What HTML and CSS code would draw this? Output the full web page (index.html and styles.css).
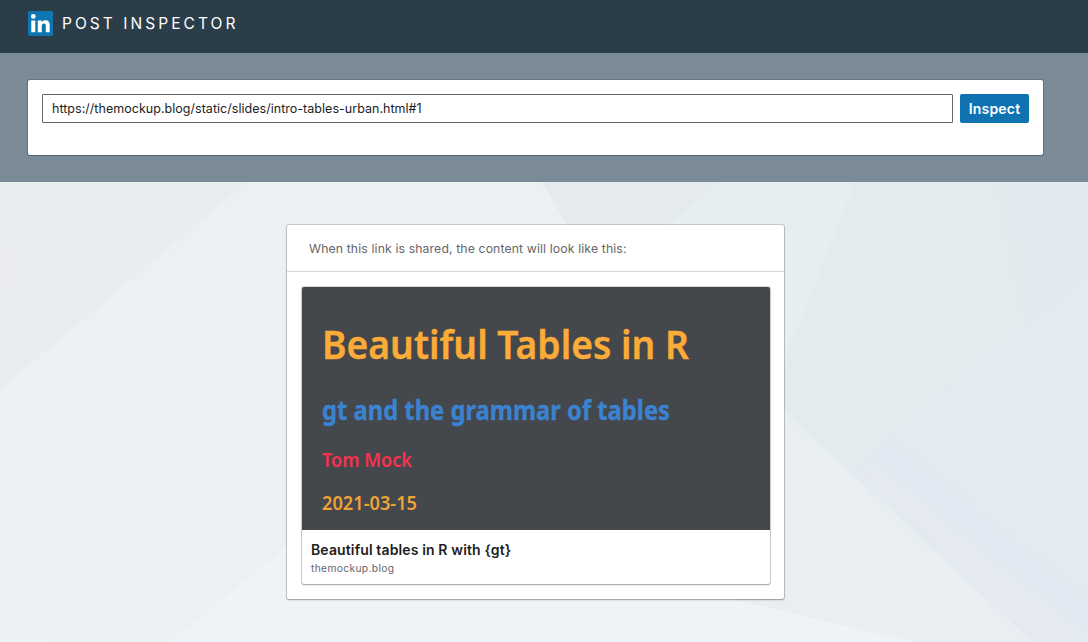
FILE: index.html
```
<!DOCTYPE html>
<html lang="en">
<head>
<meta charset="utf-8">
<title>Post Inspector</title>
<link rel="stylesheet" href="styles.css">
</head>
<body>
<header class="topbar">
  <svg class="logo" viewBox="0 0 25 25" aria-label="LinkedIn">
    <rect width="25" height="25" rx="1.5" fill="#0f76b3"/>
    <circle cx="5.3" cy="5.4" r="2.4" fill="#fff"/>
    <path fill="#fff" d="M3.3 9.5h4v11.8h-4zM9.8 9.5h3.8v1.7c.6-1.1 1.9-2 3.8-2 3.8 0 4.3 2.6 4.3 5.7v6.4h-3.9v-5.8c0-1.5-.1-3-1.9-3s-2.1 1.4-2.1 2.9v5.9h-4z"/>
  </svg>
  <h1 class="brand">POST INSPECTOR</h1>
</header>
<section class="search">
  <form class="search-card">
    <input class="url" type="text" value="https://themockup.blog/static/slides/intro-tables-urban.html#1">
    <button class="inspect" type="button">Inspect</button>
  </form>
</section>
<main class="content">
  <svg class="backdrop" viewBox="0 0 1088 460" aria-hidden="true">
    <defs>
      <radialGradient id="left" gradientUnits="userSpaceOnUse" cx="0" cy="0" r="1" gradientTransform="translate(0 84) scale(45 70)">
        <stop offset="0" stop-color="#ebebef"/><stop offset="1" stop-color="#e8edef"/>
      </radialGradient>
      <linearGradient id="middle" gradientUnits="userSpaceOnUse" x1="0" y1="300" x2="200" y2="250">
        <stop offset="0" stop-color="#ecf1f4"/><stop offset="1" stop-color="#ebf0f3"/>
      </linearGradient>
      <linearGradient id="right" gradientUnits="userSpaceOnUse" x1="1000" y1="30" x2="1050" y2="20">
        <stop offset="0" stop-color="#e3ebee"/><stop offset="1" stop-color="#e2e9f1"/>
      </linearGradient>
      <linearGradient id="lower" gradientUnits="userSpaceOnUse" x1="910" y1="350" x2="950" y2="300">
        <stop offset="0" stop-color="#e5e9f2"/><stop offset="1" stop-color="#e3eaf2"/>
      </linearGradient>
    </defs>
    <rect width="1088" height="460" fill="url(#middle)"/>
    <path fill="url(#left)" d="M0 0H247L0 208z"/>
    <path fill="#eef3f7" d="M170 460L286 365 780 248V460z"/>
    <path fill="#e5eaee" d="M542 0H720L600 100z"/>
    <path fill="#e6eef1" d="M720 0H855L785 190 600 100z"/>
    <path fill="url(#right)" d="M855 0H1088V460H1032L780 225V190z"/>
    <path fill="url(#lower)" d="M854 286L1088 90V460H1032z"/>
    <path fill="#e9eef2" d="M770 216L1032 460H914L770 426 600 386z"/>
    <path fill="#eef3f7" d="M600 386L914 460H600z"/>
  </svg>
  <article class="preview">
    <p class="preview-title">When this link is shared, the content will look like this:</p>
    <div class="preview-body">
      <div class="share">
        <svg class="slide" viewBox="0 0 468 243">
          <rect width="468" height="243" fill="#44474b"/>
          <text class="slide-title" x="20" y="72" textLength="367" lengthAdjust="spacingAndGlyphs">Beautiful Tables in R</text>
          <text class="slide-subtitle" x="20" y="133" textLength="348" lengthAdjust="spacingAndGlyphs">gt and the grammar of tables</text>
          <text class="slide-author" x="20" y="179.5" textLength="90" lengthAdjust="spacingAndGlyphs">Tom Mock</text>
          <text class="slide-date" x="20" y="222.5" textLength="95" lengthAdjust="spacingAndGlyphs">2021-03-15</text>
        </svg>
        <div class="share-text">
          <h2 class="share-title">Beautiful tables in R with {gt}</h2>
          <p class="share-source">themockup.blog</p>
        </div>
      </div>
    </div>
  </article>
</main>
</body>
</html>
```
FILE: styles.css
```
* { box-sizing: border-box; }
body {
  margin: 0;
  height: 642px;
  overflow: hidden;
  display: flex;
  flex-direction: column;
  font-family: Inter, "Liberation Sans", sans-serif;
}
h1, h2, p { margin: 0; }
.topbar {
  height: 53px;
  flex: none;
  display: flex;
  align-items: center;
  gap: 9px;
  padding: 0 28px 6px;
  background: #2b3d49;
}
.logo { width: 25px; height: 25px; }
.brand {
  padding-bottom: 1px;
  color: #fff;
  font-size: 15.5px;
  line-height: 21px;
  font-weight: 400;
  letter-spacing: 3.05px;
}
.search {
  height: 129px;
  flex: none;
  padding: 27px 45px 27px 28px;
  background: #7a8a96;
}
.search-card {
  height: 75px;
  display: flex;
  align-items: flex-start;
  gap: 7px;
  padding: 14px;
  background: #fff;
  border-radius: 2px;
  box-shadow: 0 0 0 1px rgba(0,0,0,.15), 0 1px 1px rgba(0,0,0,.15);
}
.url {
  flex: 1;
  height: 29px;
  padding: 0 9px;
  border: 1px solid #666;
  border-radius: 1px;
  font: 400 12.5px Inter, sans-serif;
  letter-spacing: .03px;
  color: #1d1d1d;
}
.inspect {
  width: 69px;
  height: 29px;
  padding: 0;
  border: 0;
  border-radius: 2px;
  background: #0f73b1;
  color: #fff;
  font: 600 14px Inter, sans-serif;
  letter-spacing: .2px;
}
.content {
  position: relative;
  flex: 1;
  padding: 43px 304px 0 287px;
}
.backdrop { position: absolute; inset: 0; width: 1088px; height: 460px; }
.preview {
  position: relative;
  height: 374px;
  background: #fff;
  border-radius: 2px;
  box-shadow: 0 0 0 1px rgba(0,0,0,.15), 0 1px 2px rgba(0,0,0,.25);
}
.preview-title {
  height: 47px;
  padding-left: 22px;
  border-bottom: 1px solid #d5d6d7;
  color: #666;
  font-size: 12.25px;
  letter-spacing: .12px;
  line-height: 48px;
}
.preview-body { padding: 15px 14px 15px 15px; }
.share {
  height: 297px;
  overflow: hidden;
  border-radius: 2px;
  box-shadow: 0 0 0 1px rgba(0,0,0,.15), 0 1px 2px rgba(0,0,0,.25);
}
.slide { display: block; width: 468px; height: 243px; font-family: "Noto Sans", sans-serif; }
.slide-title { font-size: 39px; font-weight: 600; fill: #fbab37; stroke: #fbab37; stroke-width: .4px; }
.slide-subtitle { font-size: 26px; font-weight: 700; fill: #3b83d0; stroke: #3b83d0; stroke-width: .4px; }
.slide-author { font-size: 19px; font-weight: 600; fill: #f7324f; }
.slide-date { font-size: 19px; font-weight: 600; fill: #eda336; }
.share-text { padding: 10px 9px 0; }
.share-title { font-size: 14px; line-height: 20px; font-weight: 600; letter-spacing: .13px; color: #1d1d1d; }
.share-source { font-size: 10.25px; line-height: 17px; letter-spacing: .35px; color: #666; }
```
